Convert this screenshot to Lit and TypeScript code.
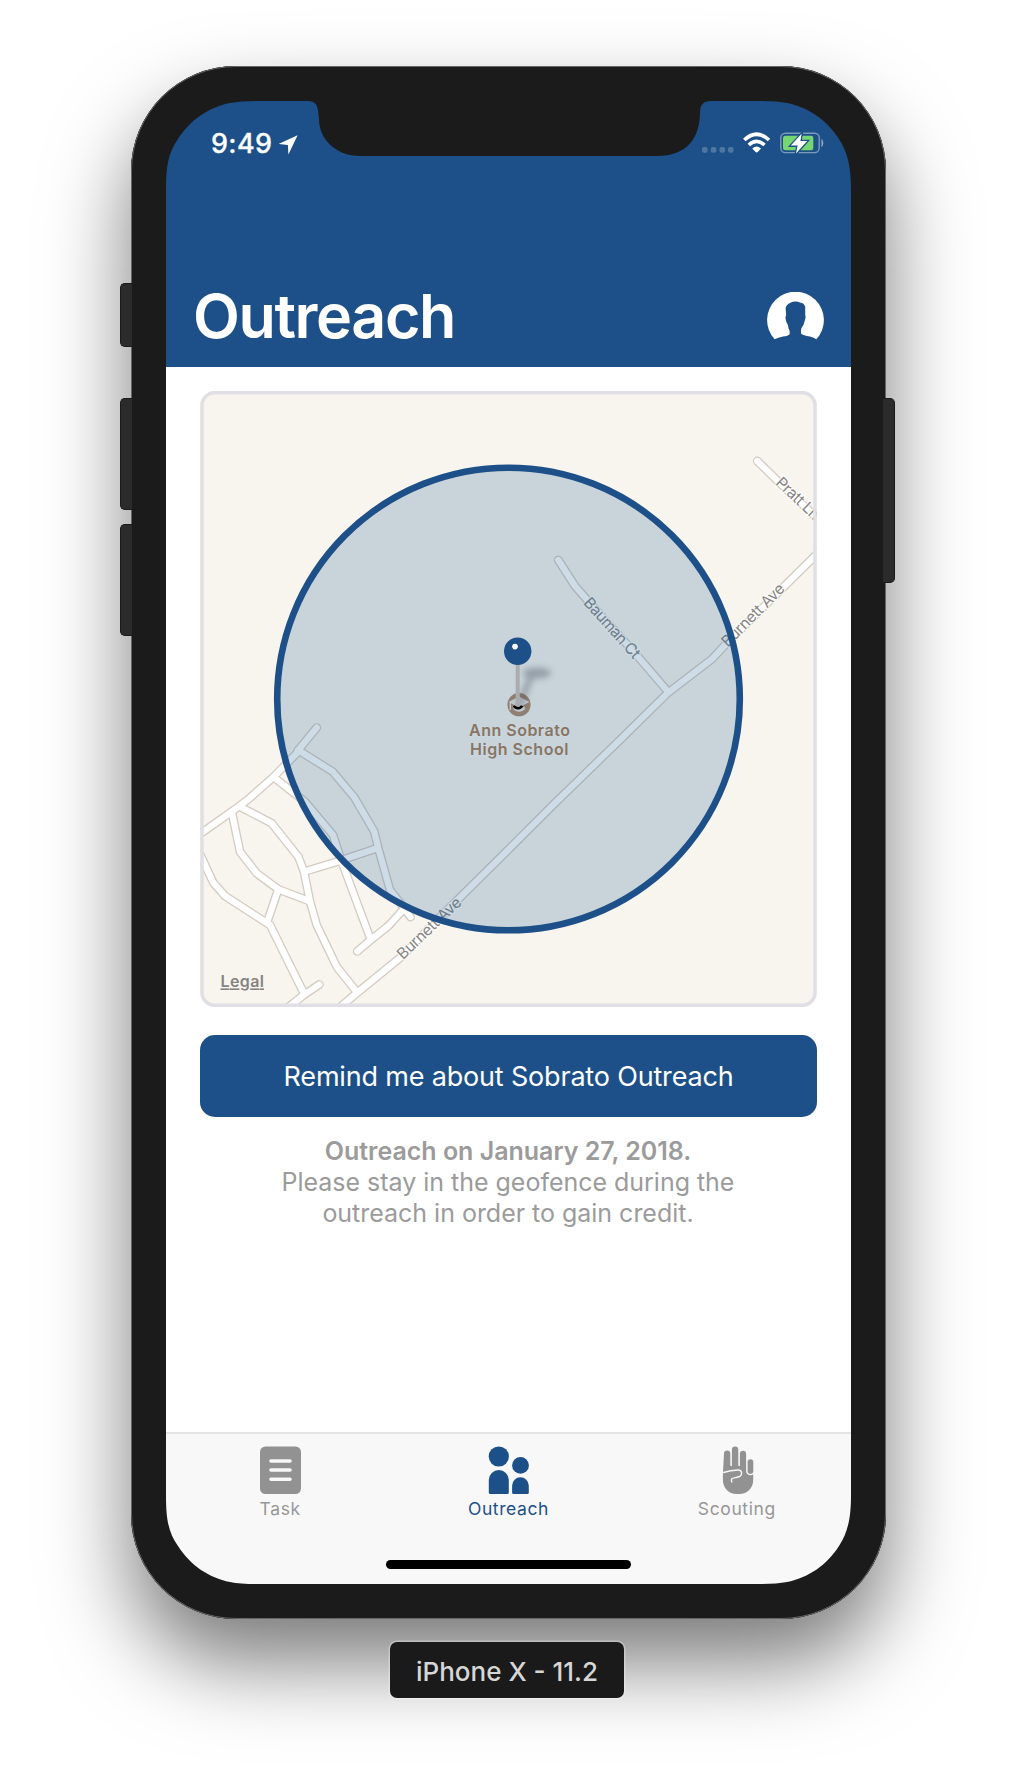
import { LitElement, html, css, svg } from "lit";
import { customElement } from "lit/decorators.js";

const ROADS: string[] = [
  "M200 834 L231.7 811.7 L248 799.5 L273 777.5 L297 753 L300 748 L316.7 727.7",
  "M298 750 L332.7 771.7 L354.3 797.3 L374.3 831.7 L378.3 848.3 L390 890 L401.7 905 L410.5 917",
  "M273.5 777 L305 801.7 L333 835 L341.7 861.7 L370.5 939",
  "M304 871.7 L336.7 861.7 L377 848.3",
  "M240 806.7 L271.7 823.3 L298.3 856.7 L304 871.7 L310 901.7 L316.7 925 L336.7 966.7 L356.7 991.7",
  "M231.7 811.7 L240 851.7 L256.7 873.3 L278.3 889.3 L308.3 900.7",
  "M278.3 889.3 L267.3 921.7",
  "M200 854 L213.3 882.7 L225 896 L270 925 L303.8 993",
  "M286 1009 L303.8 995 L319.3 984.5",
  "M357.3 951.3 L370 940.5 L388.3 926 L402 911",
  "M338 1009 L357.5 992.5 L402 956.3 L430 927 L460 897.5 L510 848 L553 805 L623 737 L668 692.7 L711.7 659.3 L727 643 L820 551",
  "M558.3 560 L575 586 L588 601 L638 656.7 L668 691.7",
  "M757.3 461 L776.7 480 L820 521",
];

@customElement("status-bar")
export class StatusBar extends LitElement {
  static styles = css`
    :host {
      display: flex;
      justify-content: space-between;
      height: 56px;
      padding: 23px 27px 0 45px;
      box-sizing: border-box;
      color: #fff;
    }
    .group {
      display: flex;
      height: 34px;
    }
    .time {
      font-size: 27px;
      line-height: 39px;
      font-weight: 500;
      letter-spacing: 0.35px;
      width: 68px;
      -webkit-text-stroke: 0.3px #fff;
    }
    .arrow {
      width: 20px;
      height: 20px;
      margin-top: 11px;
    }
    .icons {
      width: 124px;
      height: 30px;
      margin-top: 3px;
    }
  `;
  render() {
    return html`
      <div class="group">
        <span class="time">9:49</span>
        <svg class="arrow" viewBox="279 135 20 20">
          <path d="M297.6 135.2 L288.4 154.6 L287.9 144.9 L278.6 144 Z" fill="#fff" />
        </svg>
      </div>
      <svg class="icons" viewBox="700 127 124 30">
        <g fill="#fff" opacity=".22">
          <rect x="702" y="147" width="5.6" height="5.8" rx="2" />
          <rect x="710.8" y="147" width="5.6" height="5.8" rx="2" />
          <rect x="719.5" y="147" width="5.6" height="5.8" rx="2" />
          <rect x="728" y="147" width="5.6" height="5.8" rx="2" />
        </g>
        <g fill="none" stroke="#fff" stroke-width="3.7">
          <path d="M744.3 140 Q756.6 128.6 769 140" />
          <path d="M748.8 145 Q756.6 137.8 764.5 145" />
        </g>
        <path d="M752.3 148.4 Q756.6 144.6 761 148.4 L758 151.8 Q756.6 153.2 755.3 151.8 Z" fill="#fff" />
        <rect x="780.8" y="133.2" width="38.4" height="19.4" rx="4.6" fill="none" stroke="#fff" stroke-opacity=".42" stroke-width="1.4" />
        <path d="M821.8 139.5 Q824.2 143 821.8 146.5 Z" fill="#fff" stroke="#fff" stroke-width=".6" opacity=".55" />
        <rect x="783" y="135.7" width="30.3" height="14.6" rx="2.2" fill="#76d672" />
        <path d="M801.6 133.8 L790.8 145.6 L797.6 145.6 L796 153.6 L807.2 141 L800.4 141 Z" fill="#fff" stroke="#1d5088" stroke-width="2.6" paint-order="stroke" />
      </svg>
    `;
  }
}

@customElement("outreach-map")
export class OutreachMap extends LitElement {
  static styles = css`
    :host {
      display: block;
      width: 617px;
      height: 616px;
    }
    .map {
      display: block;
      width: 617px;
      height: 616px;
      font-family: Inter, sans-serif;
    }
    .street {
      font-size: 15.5px;
      fill: #878583;
      stroke: #fff;
      stroke-width: 2.5px;
      stroke-opacity: 0.75;
      paint-order: stroke;
      text-anchor: middle;
    }
    .poi {
      font-size: 16px;
      font-weight: 600;
      fill: #a97c54;
      stroke: #fff;
      stroke-width: 2px;
      stroke-opacity: 0.4;
      paint-order: stroke;
      text-anchor: middle;
    }
    .legal {
      font-size: 16px;
      font-weight: 600;
      fill: #868482;
      text-decoration: underline;
    }
  `;
  render() {
    return html`
      <svg class="map" viewBox="200 391 617 616">
        <defs>
          <clipPath id="frame"><rect x="200.2" y="391" width="616.6" height="616" rx="14.5" /></clipPath>
          <filter id="soft" x="-50%" y="-50%" width="200%" height="200%"><feGaussianBlur stdDeviation="3.2" /></filter>
        </defs>
        <g clip-path="url(#frame)">
          <rect x="200" y="390" width="618" height="618" fill="#f8f5ee" />
          <g fill="none" stroke-linecap="round" stroke-linejoin="round">
            <g stroke="#d4cbc1" stroke-width="8.9">${ROADS.map((d) => svg`<path d=${d} />`)}</g>
            <g stroke="#fff" stroke-width="6.3">${ROADS.map((d) => svg`<path d=${d} />`)}</g>
          </g>
          <text class="street" transform="translate(611.5 628.5) rotate(48)" y="4.5" textLength="76">Bauman Ct</text>
          <text class="street" transform="translate(753.5 615.5) rotate(-45)" y="4.5" textLength="82">Burnett Ave</text>
          <text class="street" transform="translate(429.3 928.3) rotate(-43.5)" y="5" textLength="82">Burnett Ave</text>
          <text class="street" transform="translate(797.5 499) rotate(43.5)" y="4.5" textLength="54">Pratt Ln</text>
          <circle cx="519" cy="704.7" r="11.6" fill="#b18a6a" />
          <path d="M519 696.5 L529.5 702 L519 707.5 L508.5 702 Z" fill="#fff" opacity=".8" />
          <path d="M513.5 706.5 L519 709.5 L524.8 706.5 V709.5 Q519 714 513.5 709.5 Z" fill="#fff" opacity=".8" />
          <path d="M510.3 703 V710" stroke="#fff" stroke-width="1.4" opacity=".8" />
          <text class="poi" x="519.5" y="736" textLength="101">Ann Sobrato</text>
          <text class="poi" x="519.2" y="754.5" textLength="98.5">High School</text>
          <circle cx="508.5" cy="699" r="231.3" fill="#1d5b95" fill-opacity=".215" />
          <circle cx="508.5" cy="699" r="231.3" fill="none" stroke="#1d5088" stroke-width="6.6" />
          <g filter="url(#soft)" opacity=".34">
            <ellipse cx="537" cy="673" rx="14" ry="5.5" fill="#33384a" />
            <path d="M532 674 L519 706" stroke="#33384a" stroke-width="6" />
          </g>
          <path d="M513.8 705.8 Q514.8 708.2 518 708.2 Q521 708.2 522 705.8" fill="none" stroke="#000" stroke-width="2.4" />
          <rect x="515.7" y="660" width="4" height="46" fill="#acacb0" />
          <circle cx="517.7" cy="651.3" r="13.7" fill="#1d5088" />
          <circle cx="515" cy="646.6" r="2.8" fill="#fff" />
          <text class="legal" x="220.5" y="987.4" textLength="43.5">Legal</text>
        </g>
        <rect x="202" y="392.7" width="613" height="612.6" rx="12.8" fill="none" stroke="#dfdfe5" stroke-width="3.5" />
      </svg>
    `;
  }
}

@customElement("tab-bar")
export class TabBar extends LitElement {
  static styles = css`
    :host {
      display: flex;
      flex-direction: column;
      align-items: center;
      height: 152px;
      box-sizing: border-box;
      border-top: 2px solid #e4e4e5;
      background: #f8f8f8;
    }
    .tabs {
      display: flex;
      width: 100%;
      height: 126px;
    }
    .tab {
      flex: 1;
      display: flex;
      flex-direction: column;
      align-items: center;
      padding-top: 12px;
      color: #979797;
      font-size: 17.5px;
      line-height: 22px;
      letter-spacing: 0.6px;
    }
    .active {
      color: #1d5088;
    }
    .icon {
      width: 44px;
      height: 48px;
      margin-bottom: 4px;
    }
    .home {
      width: 245px;
      height: 9px;
      border-radius: 5px;
      background: #000;
    }
  `;
  render() {
    return html`
      <div class="tabs">
        <div class="tab">
          <svg class="icon" viewBox="258 1446 44 48">
            <rect x="260" y="1446.5" width="41" height="47.5" rx="5.5" fill="#929292" />
            <path d="M271 1461 H290 M271 1470 H290 M271 1479.2 H290" stroke="#f8f8f8" stroke-width="3.6" stroke-linecap="round" />
          </svg>
          <span>Task</span>
        </div>
        <div class="tab active">
          <svg class="icon" viewBox="486.2 1446 44 48">
            <g fill="#1d5088">
              <circle cx="499" cy="1456.5" r="10.1" />
              <circle cx="520.7" cy="1465.4" r="8.4" />
              <path d="M489 1480 a10 10 0 0 1 20 0 V1492.5 q0 1.5 -1.5 1.5 H490.5 q-1.5 0 -1.5 -1.5 Z" />
              <path d="M512.3 1485.7 a8.35 8.35 0 0 1 16.7 0 V1492.5 q0 1.5 -1.5 1.5 H513.8 q-1.5 0 -1.5 -1.5 Z" />
            </g>
          </svg>
          <span>Outreach</span>
        </div>
        <div class="tab">
          <svg class="icon" viewBox="714.7 1446 44 48">
            <g fill="#929292">
              <path d="M723.7 1453.6 a3.15 3.15 0 0 1 6.3 0 V1465.5 q.8 1.4 1.6 0 V1449.8 a3.2 3.2 0 0 1 6.4 0 V1465.5 q.8 1.4 1.6 0 V1453.8 a3.1 3.1 0 0 1 6.2 0 V1471 Q746 1475 749.8 1475.2 Q752 1475.4 752.9 1474 V1480 C752.9 1488 747 1494 739 1494 H736.5 C728.5 1494 722.6 1488 722.6 1480 V1474 Z" />
              <rect x="747.3" y="1459.2" width="5.7" height="14.6" rx="2.8" />
            </g>
            <path d="M722 1472.6 C728 1471.5 733 1469.8 738 1470 C742 1470.2 742.3 1474.5 739.5 1476.4 C736.5 1478 732.5 1477.3 731.2 1479.2 Q730.8 1481 731.7 1482.5" fill="none" stroke="#f8f8f8" stroke-width="1.4" />
          </svg>
          <span>Scouting</span>
        </div>
      </div>
      <div class="home"></div>
    `;
  }
}

@customElement("app-root")
export class AppRoot extends LitElement {
  static styles = css`
    :host {
      display: flex;
      flex-direction: column;
      align-items: center;
      width: 1016px;
      height: 1782px;
      box-sizing: border-box;
      padding-top: 66px;
      background: #fff;
      overflow: hidden;
      font-family: Inter, sans-serif;
    }
    .phone {
      position: relative;
      width: 755px;
      height: 1553px;
      margin-left: 1px;
      box-sizing: border-box;
      padding: 35px;
      border-radius: 105px;
      background: #1b1b1b;
      box-shadow: 0 44px 84px rgba(0, 0, 0, 0.52);
    }
    .screen {
      display: flex;
      flex-direction: column;
      width: 685px;
      height: 1483px;
      background: #fff;
    }
    .header {
      display: flex;
      flex-direction: column;
      justify-content: space-between;
      height: 266px;
      background: #1d5088;
    }
    .titlebar {
      display: flex;
      justify-content: space-between;
      align-items: flex-end;
      padding: 0 27px 27px 27px;
    }
    .title {
      margin: 0;
      color: #fff;
      font-size: 61px;
      line-height: 48px;
      font-weight: 600;
      letter-spacing: -1.4px;
    }
    .avatar {
      width: 57px;
      height: 48px;
    }
    .content {
      flex: 1;
      display: flex;
      flex-direction: column;
      align-items: center;
      padding-top: 24px;
    }
    .remind {
      width: 617px;
      height: 82px;
      margin: 27.5px 0 19px;
      padding: 1px 0 0;
      border: 0;
      border-radius: 15px;
      background: #1d5088;
      color: #fff;
      font: 400 27px/81px Inter, sans-serif;
      letter-spacing: -0.18px;
    }
    .note {
      margin: 0 1px 0 0;
      color: #9b9b9b;
      font-size: 25px;
      line-height: 31px;
      letter-spacing: -0.02px;
      text-align: center;
    }
    .date {
      font-weight: 600;
    }
    .bezel {
      position: absolute;
      left: 0;
      top: 0;
      width: 755px;
      height: 1553px;
    }
    .side {
      position: absolute;
      width: 11px;
      box-sizing: border-box;
      border: 1px solid #1a1a1a;
      background: #2b2b2b;
    }
    .left {
      left: -11px;
      width: 12px;
      border-right: 0;
      border-radius: 5px 0 0 5px;
    }
    .right {
      right: -9px;
      width: 12px;
      border-left: 0;
      border-radius: 0 5px 5px 0;
    }
    .mute {
      top: 217px;
      height: 64px;
    }
    .up {
      top: 332px;
      height: 112px;
    }
    .down {
      top: 458px;
      height: 112px;
    }
    .power {
      top: 332px;
      height: 185px;
    }
    .device {
      z-index: 1;
      margin-top: 23px;
      margin-right: 2px;
      width: 234px;
      height: 56px;
      border-radius: 7px;
      background: #1a1a1a;
      box-shadow: 0 0 0 1.5px rgba(255, 255, 255, 0.3);
      color: #d6d6d6;
      font-size: 26px;
      line-height: 59px;
      font-weight: 500;
      text-align: center;
    }
  `;

  render() {
    return html`
      <div class="phone">
        <div class="screen">
          <div class="header">
            <status-bar></status-bar>
            <div class="titlebar">
              <h1 class="title">Outreach</h1>
              <svg class="avatar" viewBox="767 291.5 57 48">
                <path
                  d="M774.6 338.8 A28.4 28.4 0 1 1 816.4 338.8 Q814 337 810 336 Q803 335 801.2 333.2 Q800.6 331 801.5 327.5 Q804 324 804.7 320.5 L805.6 317 L805.2 314 V306 Q803.5 302 800.5 302.2 Q795 299.8 790 302.5 Q785.8 304.5 785.6 308 L786.2 314.5 L785.4 317 L786.3 321.5 Q788.3 324 788.6 328 Q790.2 331 789.5 334 Q787 336 783 336 Q778 337.3 774.6 338.8 Z"
                  fill="#fff"
                />
              </svg>
            </div>
          </div>
          <div class="content">
            <outreach-map></outreach-map>
            <button class="remind">Remind me about Sobrato Outreach</button>
            <p class="note">
              <span class="date">Outreach on January 27, 2018.</span><br />
              Please stay in the geofence during the<br />
              outreach in order to gain credit.
            </p>
          </div>
          <tab-bar></tab-bar>
        </div>
        <svg class="bezel" viewBox="131 66 755 1553">
          <path
            fill="#1b1b1b"
            fill-rule="evenodd"
            d="M236 66 H781 A105 105 0 0 1 886 171 V1514 A105 105 0 0 1 781 1619 H236 A105 105 0 0 1 131 1514 V171 A105 105 0 0 1 236 66 Z
               M166 190 V1495 C166 1518 168 1532 178 1546 C190 1565 209 1578 230 1582 Q240 1584 256 1584 H761 Q777 1584 787 1582 C808 1578 827 1565 839 1546 C848 1532 851 1518 851 1495 V190 C851 167 848 153 839 139 C827 120 808 107 787 103 Q777 101 761 101 H711 Q700 101 700 112 C700 138 687 156 657 156 H360 C337 156 319 140 319 119 L318 110 Q317 101 308 101 H256 Q240 101 230 103 C209 107 190 120 178 139 C168 153 166 167 166 190 Z"
          />
          <rect x="131.5" y="66.5" width="754" height="1552" rx="104.5" fill="none" stroke="#666" stroke-width="1" />
        </svg>
        <div class="side left mute"></div>
        <div class="side left up"></div>
        <div class="side left down"></div>
        <div class="side right power"></div>
      </div>
      <div class="device">iPhone X - 11.2</div>
    `;
  }
}
